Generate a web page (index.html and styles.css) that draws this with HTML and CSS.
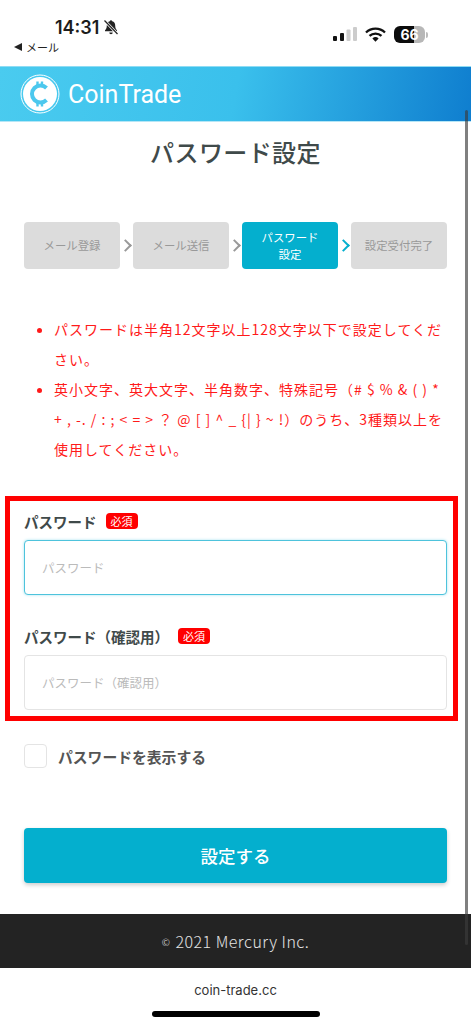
FILE: index.html
```html
<!DOCTYPE html>
<html lang="ja">
<head>
  <meta charset="UTF-8">
  <meta name="viewport" content="width=device-width, initial-scale=1.0">
  <title>パスワード設定</title>
  <link rel="stylesheet" href="styles.css">
</head>
<body>
  <!-- iOS status bar -->
  <div class="status-bar">
    <div class="status-left">
      <div class="time-row">
        <span class="time">14:31</span>
        <svg class="bell" width="16" height="16" viewBox="0 0 16 16">
          <path d="M8 1.2c.7 0 1.1.4 1.2 1 2 .5 3 2.100 3 4.200 0 2.600.8 3.800 1.800 4.800v1H2v-1c1-1 1.800-2.200 1.800-4.800 0-2.100 1-3.700 3-4.200.1-.6.500-1 1.200-1z" fill="#222"/>
          <path d="M6.300 13.600h3.400c0 1-.7 1.600-1.700 1.600s-1.700-.6-1.700-1.600z" fill="#222"/>
          <path d="M1.500 1.500l13 13.500" stroke="#fff" stroke-width="2.600"/>
          <path d="M1.500 1.500l13 13.500" stroke="#222" stroke-width="1.200"/>
        </svg>
      </div>
      <div class="back-row"><span class="back-arrow"></span>メール</div>
    </div>
    <div class="status-right">
      <svg width="24" height="15" viewBox="0 0 24 15">
        <rect x="0" y="9" width="4" height="5" rx="1" fill="#111"/>
        <rect x="7" y="6" width="4" height="8" rx="1" fill="#111"/>
        <rect x="13.500" y="2.500" width="4" height="11.500" rx="1" fill="#ccc"/>
        <rect x="20" y="0" width="4" height="14" rx="1" fill="#ccc"/>
      </svg>
      <svg class="wifi" width="21" height="15" viewBox="0 0 21 15">
        <path d="M1 5.500a13.600 13.600 0 0 1 19 0M4.500 8.900a8.800 8.800 0 0 1 12 0" fill="none" stroke="#111" stroke-width="2.300"/>
        <path d="M7.400 11.400a4.500 4.500 0 0 1 6.200 0l-3.100 3.300z" fill="#111"/>
      </svg>
      <div class="battery"><span class="battery-level">66</span></div>
      <span class="battery-nub"></span>
    </div>
  </div>

  <header class="site-header">
    <svg class="logo" width="40" height="40" viewBox="0 0 40 40">
      <circle cx="20" cy="20" r="19" fill="none" stroke="#fff" stroke-width="1"/>
      <circle cx="20" cy="20" r="17" fill="#fff"/>
      <path d="M26.500 14a8.500 8.500 0 1 0 0 12" fill="none" stroke="#4cc8ee" stroke-width="4"/>
      <path d="M17.500 7.500v4.500M22 7.500v4.500M17.500 28v4.500M22 28v4.500" stroke="#4cc8ee" stroke-width="2.400"/>
    </svg>
    <span class="brand">CoinTrade</span>
  </header>

  <h1 class="page-title">パスワード設定</h1>

  <div class="steps">
    <div class="step">メール登録</div>
    <span class="chevron"></span>
    <div class="step">メール送信</div>
    <span class="chevron"></span>
    <div class="step active">パスワード<br>設定</div>
    <span class="chevron active"></span>
    <div class="step">設定受付完了</div>
  </div>

  <ul class="rules">
    <li>パスワードは半角12文字以上128文字以下で設定してください。</li>
    <li>英小文字、英大文字、半角数字、特殊記号（# $ % &amp; ( ) * + , -. / : ; &lt; = &gt; ？ @ [ ] ^ _ {| } ~ !）のうち、3種類以上を使用してください。</li>
  </ul>

  <div class="highlight">
    <div class="field">
      <label class="field-label">パスワード<span class="required">必須</span></label>
      <input class="text-input focused" type="password" placeholder="パスワード">
    </div>
    <div class="field second">
      <label class="field-label">パスワード（確認用）<span class="required">必須</span></label>
      <input class="text-input" type="password" placeholder="パスワード（確認用）">
    </div>
  </div>

  <div class="show-password">
    <span class="checkbox"></span>
    <span>パスワードを表示する</span>
  </div>

  <button class="submit-btn">設定する</button>

  <footer class="site-footer"><span class="copy">©</span> 2021 Mercury Inc.</footer>

  <div class="url-bar">coin-trade.cc</div>
  <div class="home-bar"></div>

  <div class="scrollbar"></div>
</body>
</html>
```

FILE: styles.css
```css
* {
  margin: 0;
  padding: 0;
  box-sizing: border-box;
}

body {
  font-family: "Noto Sans CJK JP", "Noto Sans", sans-serif;
  background-color: #fff;
  color: #3f4a4a;
  width: 471px;
  height: 1024px;
  position: relative;
  overflow: hidden;
}

.status-bar {
  height: 66px;
  display: flex;
  justify-content: space-between;
  padding: 16px 43px 0 14px;
}

.time-row {
  display: flex;
  align-items: center;
  gap: 4px;
  padding-left: 41px;
  height: 22px;
}

.time {
  font-family: Inter, sans-serif;
  font-size: 18px;
  font-weight: 600;
  color: #1c1c1c;
}

.back-row {
  display: flex;
  align-items: center;
  gap: 4px;
  font-size: 11px;
  color: #222;
  height: 16px;
  margin-top: 1px;
}

.back-arrow {
  width: 0;
  height: 0;
  border-top: 4px solid transparent;
  border-bottom: 4px solid transparent;
  border-right: 8px solid #222;
}

.status-right {
  display: flex;
  align-items: flex-start;
  padding-top: 11px;
}

.wifi {
  margin-left: 8px;
}

.battery {
  width: 31px;
  height: 17px;
  margin-left: 8px;
  margin-top: -1px;
  border-radius: 6px;
  background: linear-gradient(to right, #0c0c0c 66%, #b7b7b7 66%);
  text-align: center;
}

.battery-level {
  font-family: Inter, sans-serif;
  font-size: 14px;
  line-height: 17px;
  font-weight: 700;
  color: #fff;
  display: block;
}

.battery-nub {
  width: 2px;
  height: 6px;
  margin: 5px 0 0 1px;
  background: #bbb;
  border-radius: 0 2px 2px 0;
}

.site-header {
  height: 56px;
  display: flex;
  align-items: center;
  padding-left: 20px;
  gap: 8px;
  background: linear-gradient(100deg, #4acbef 0%, #3ac0ec 50%, #0f7ecf 100%);
  border-top: 1px solid #8edcf4;
  border-bottom: 1px solid #b5e6f6;
}

.brand {
  font-family: Roboto, sans-serif;
  font-size: 25px;
  color: #fff;
}

.page-title {
  font-size: 24px;
  font-weight: 500;
  line-height: 30px;
  letter-spacing: 0.4px;
  text-align: center;
  margin-top: 15px;
}

.steps {
  display: flex;
  align-items: center;
  margin: 55px 24px 0;
  height: 47px;
}

.step {
  width: 96px;
  height: 47px;
  display: flex;
  align-items: center;
  justify-content: center;
  text-align: center;
  font-size: 11.4px;
  line-height: 17px;
  color: #999;
  background-color: #dcdcdc;
  border-radius: 4px;
}

.step.active {
  color: #fff;
  background-color: #04afce;
}

.chevron {
  flex: 1;
  display: flex;
  justify-content: center;
}

.chevron::before {
  content: "";
  width: 7px;
  height: 7px;
  margin-right: 3px;
  border-top: 2.5px solid #999;
  border-right: 2.5px solid #999;
  transform: rotate(45deg);
}

.chevron.active::before {
  border-color: #04afce;
}

.rules {
  margin: 45px 24px 0 54px;
  font-size: 14px;
  line-height: 30px;
  color: #ff1a1a;
  letter-spacing: 1px;
}

.rules li::marker {
  font-size: 14px;
}

.highlight {
  width: 453px;
  height: 225px;
  margin: 32px 0 0 5px;
  border: 5px solid #f00;
  padding: 10px 6px 0 14px;
}

.field-label {
  display: flex;
  align-items: center;
  height: 20px;
  font-size: 14.5px;
  font-weight: 700;
}

.required {
  margin-left: 9px;
  padding: 0 5px;
  height: 16px;
  line-height: 16px;
  font-size: 11px;
  font-weight: 400;
  color: #fff;
  background-color: #f00;
  border-radius: 4px;
}

.text-input {
  display: block;
  width: 100%;
  height: 55px;
  margin-top: 9px;
  padding: 0 17px;
  font-family: inherit;
  font-size: 12.5px;
  border: 1px solid #e4e4e4;
  border-radius: 4px;
  outline: none;
  background: #fff;
}

.text-input::placeholder {
  color: #bbb;
}

.text-input.focused {
  border: 1.5px solid #4ec3dc;
  box-shadow: 0 0 3px #a5e3f0;
}

.field.second {
  margin-top: 31px;
}

.show-password {
  display: flex;
  align-items: center;
  gap: 11px;
  margin: 23px 24px 0;
  height: 24px;
  font-size: 14.8px;
  font-weight: 700;
  color: #555;
}

.checkbox {
  width: 23px;
  height: 24px;
  border: 1px solid #e4e4e4;
  border-radius: 4px;
}

.submit-btn {
  display: block;
  width: 423px;
  height: 55px;
  margin: 60px 0 0 24px;
  border: none;
  border-radius: 4px;
  font-family: inherit;
  font-size: 17.5px;
  font-weight: 500;
  color: #fff;
  background-color: #04afce;
  box-shadow: 0 2px 4px rgba(0, 0, 0, 0.2);
}

.site-footer {
  height: 54px;
  margin-top: 31px;
  display: flex;
  align-items: center;
  justify-content: center;
  gap: 5px;
  font-size: 16px;
  font-weight: 300;
  letter-spacing: 0.5px;
  color: #e4e4e4;
  background-color: #232323;
}

.copy {
  font-size: 10px;
}

.url-bar {
  margin-top: 13px;
  font-family: Inter, sans-serif;
  font-size: 13px;
  line-height: 18px;
  text-align: center;
  color: #333;
}

.home-bar {
  width: 168px;
  height: 6px;
  margin: 12px 0 0 152px;
  background-color: #000;
  border-radius: 3px;
}

.scrollbar {
  position: absolute;
  left: 465px;
  top: 110px;
  width: 3px;
  height: 835px;
  border-radius: 2px;
  background: rgba(60, 60, 60, 0.65);
}
```
